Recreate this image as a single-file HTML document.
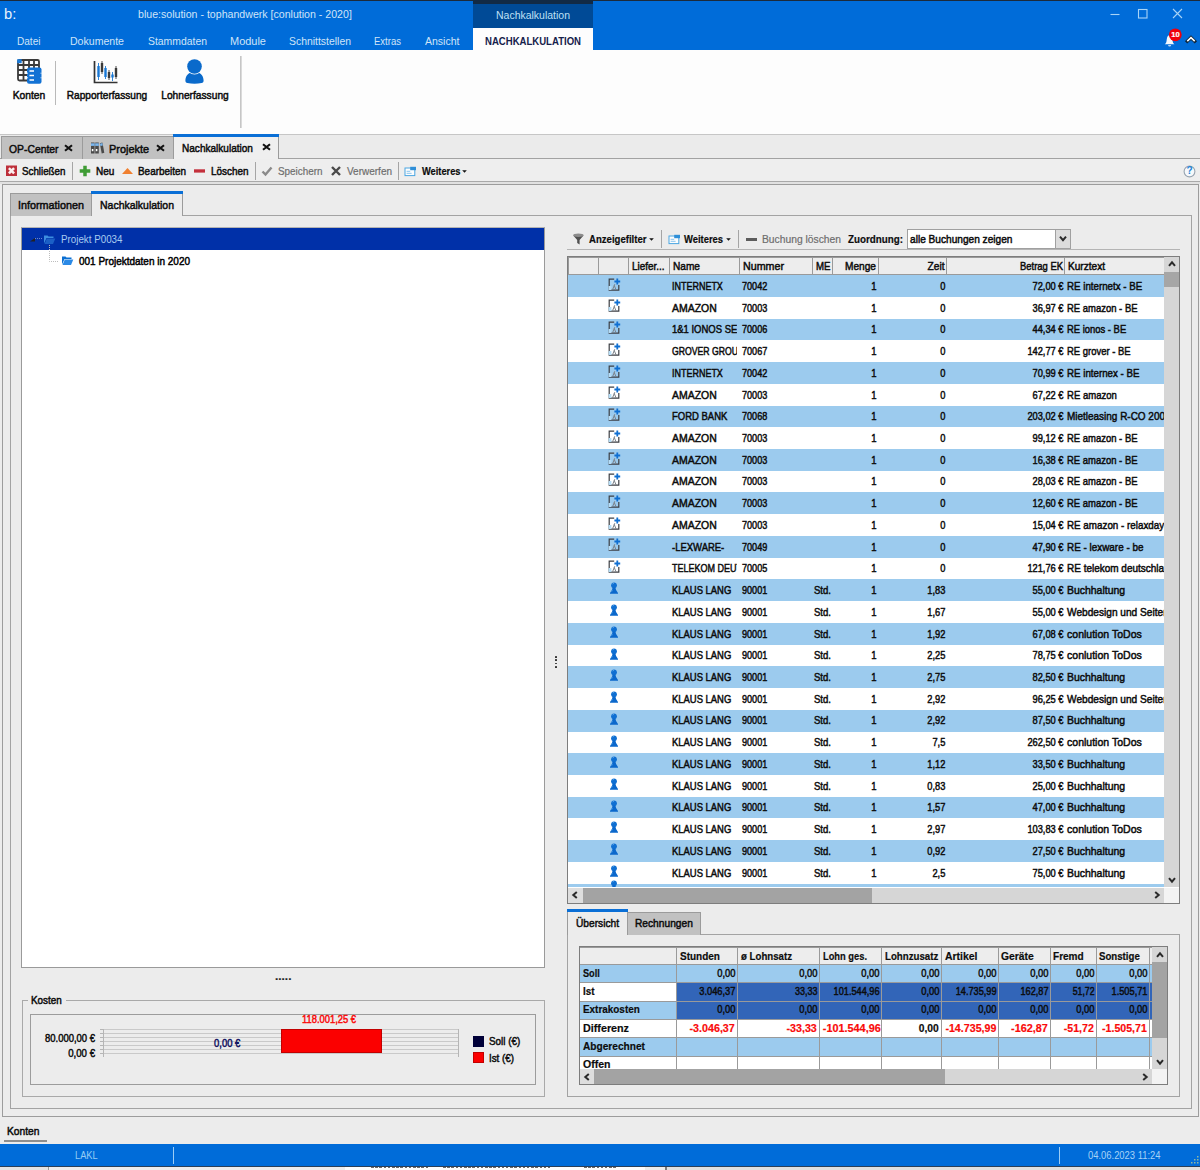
<!DOCTYPE html>
<html lang="de"><head><meta charset="utf-8"><title>blue:solution - tophandwerk [conlution - 2020]</title>
<style>
html,body{margin:0;padding:0;}
body{width:1200px;height:1170px;position:relative;overflow:hidden;background:#ececec;font-family:"Liberation Sans",sans-serif;font-size:11.6px;color:#0c0c0c;}
section{position:absolute;left:0;top:0;}
div,span.t,svg{position:absolute;box-sizing:border-box;}
span.t{white-space:nowrap;line-height:14px;height:14px;transform-origin:0 0;-webkit-text-stroke:0.5px currentColor;}
span.b{font-weight:bold;-webkit-text-stroke:0.2px currentColor;}
span.n{-webkit-text-stroke:0;}
</style></head>
<body>
<section id="window-chrome">
<div style="left:0px;top:0px;width:1200px;height:50px;background:#006cd9;"></div>
<div style="left:0px;top:0px;width:1200px;height:1px;background:#1c2a3a;"></div>
<div style="left:473px;top:1px;width:120px;height:27px;background:#004a96;"></div>
<div style="left:473px;top:0px;width:120px;height:4px;background:#122a45;"></div>
<div style="left:473px;top:28px;width:120px;height:22px;background:#fdfdfd;"></div>
<span class="t n" style="left:3.5px;top:6.93px;transform:scaleX(0.950);font-size:15.5px;color:#e8f2fc;">b:</span>
<span class="t n" style="left:137.5px;top:6.88px;transform:scaleX(0.914);color:#cfe4f8;">blue:solution - tophandwerk [conlution - 2020]</span>
<span class="t n" style="left:473px;top:7.58px;width:120px;text-align:center;transform:scaleX(0.904);transform-origin:50% 0;color:#bfe0f5;">Nachkalkulation</span>
<span class="t n" style="left:16.5px;top:33.98px;transform:scaleX(0.868);color:#cfe4f8;">Datei</span>
<span class="t n" style="left:70px;top:33.98px;transform:scaleX(0.910);color:#cfe4f8;">Dokumente</span>
<span class="t n" style="left:147.5px;top:33.98px;transform:scaleX(0.897);color:#cfe4f8;">Stammdaten</span>
<span class="t n" style="left:230px;top:33.98px;transform:scaleX(0.946);color:#cfe4f8;">Module</span>
<span class="t n" style="left:289px;top:33.98px;transform:scaleX(0.899);color:#cfe4f8;">Schnittstellen</span>
<span class="t n" style="left:374px;top:33.98px;transform:scaleX(0.821);color:#cfe4f8;">Extras</span>
<span class="t n" style="left:424.5px;top:33.98px;transform:scaleX(0.907);color:#cfe4f8;">Ansicht</span>
<span class="t b n" style="left:473px;top:34.28px;width:120px;text-align:center;transform:scaleX(0.825);transform-origin:50% 0;color:#15204a;">NACHKALKULATION</span>
<svg style="left:1105px;top:4px" width="90" height="22" viewBox="0 0 90 22"><g stroke="#a8d4f7" stroke-width="1.1" fill="none"><path d="M5.5 10.5h9"/><rect x="33.5" y="5.5" width="8.5" height="8.5"/><path d="M68 5l9 9M77 5l-9 9"/></g></svg>
<svg style="left:1160px;top:26px" width="40" height="24" viewBox="0 0 40 24"><path d="M4.800 18.200c1.800-1.200 1.700-3.200 2-5.200c.3-2.200 1.200-3.600 2.800-3.900c1.600.3 2.500 1.700 2.800 3.900c.3 2 .2 4 2 5.200z" fill="#f4f8fd"/><path d="M8.100 19.200h3c0 1.600-3 1.600-3 0z" fill="#f4f8fd"/><circle cx="15.300" cy="8.800" r="6.400" fill="#f0000c"/><path d="M27.300 15.200l3.700-3.500l3.700 3.500" stroke="#10283c" stroke-width="3.400" fill="none" stroke-linecap="square"/><path d="M27.300 15.200l3.700-3.500l3.700 3.500" stroke="#fff" stroke-width="1.600" fill="none"/></svg>
<span class="t b" style="left:1169px;top:28.03px;width:13px;text-align:center;transform:scaleX(0.950);transform-origin:50% 0;font-size:8px;color:#fff;">10</span>
<div style="left:0px;top:50px;width:1200px;height:84px;background:#fdfdfd;"></div>
<div style="left:0px;top:134px;width:1200px;height:1px;background:#c6c6c6;"></div>
<div style="left:55px;top:61px;width:1px;height:44px;background:#b9b9b9;"></div>
<div style="left:240px;top:56px;width:2px;height:72px;background:linear-gradient(90deg,#c6c6c6 0 1px,#dadada 1px 2px);"></div>
<span class="t" style="left:-21.5px;top:88.48px;width:100px;text-align:center;transform:scaleX(0.887);transform-origin:50% 0;">Konten</span>
<span class="t" style="left:56.5px;top:88.48px;width:100px;text-align:center;transform:scaleX(0.872);transform-origin:50% 0;">Rapporterfassung</span>
<span class="t" style="left:144.5px;top:88.48px;width:100px;text-align:center;transform:scaleX(0.880);transform-origin:50% 0;">Lohnerfassung</span>
<svg style="left:16px;top:57px" width="28" height="28" viewBox="0 0 28 28">
<g stroke="#3a3a3a" stroke-width="1.800" fill="none"><rect x="2" y="3" width="21" height="20.500" rx="1.500"/><path d="M2 8h21M2 13h21M2 18h21M7.5 3v20M13 3v20M18 3v20"/></g>
<rect x="1.2" y="2.2" width="4.5" height="4" fill="#1a7ad9"/>
<rect x="11" y="10.500" width="14.500" height="16.300" rx="2" fill="#1272d4"/>
<path d="M13.500 14h4.500M13.500 18.500h4.500M13.500 23h4.500" stroke="#fff" stroke-width="1.500"/>
<path d="M11 16.200h.9M11 20.800h.9M24.600 16.200h.9M24.600 20.800h.9" stroke="#fff" stroke-width="1"/>
</svg>
<svg style="left:92px;top:58px" width="28" height="28" viewBox="0 0 28 28">
<path d="M2.5 3v21.500h23" stroke="#333" stroke-width="1.7" fill="none"/>
<g stroke="#1878d6" stroke-width="2.4"><path d="M6.5 8v11"/><path d="M13.5 10v9"/><path d="M20.500 16.500v3"/></g>
<g stroke="#1878d6" stroke-width="0.9"><path d="M6.5 5v17"/><path d="M13.5 8v13"/><path d="M20.5 14v9"/></g>
<g stroke="#3a3a3a" stroke-width="2.4"><path d="M10 5v9"/><path d="M17 14v6"/><path d="M24 10v9"/></g>
<g stroke="#3a3a3a" stroke-width="0.9"><path d="M10 3v13"/><path d="M17 12v10"/><path d="M24 8v13"/></g>
</svg>
<svg style="left:181px;top:57px" width="28" height="28" viewBox="0 0 28 28">
<path d="M4.400 23.800c0-5 3-7.900 6-8.300h6.200c3 .4 6 3.300 6 8.300c0 1.200-.6 1.900-2 2.300c-4.500 1-9.700 1-14.200 0c-1.400-.4-2-1.100-2-2.300z" fill="#0a6acb"/>
<circle cx="13.500" cy="9.600" r="7.900" fill="#fdfdfd"/><circle cx="13.500" cy="9.500" r="7.300" fill="#0a6acb"/>
</svg>
<div style="left:0px;top:135px;width:1200px;height:24px;background:#ebebeb;"></div>
<div style="left:0px;top:158px;width:1200px;height:1px;background:#a2a2a2;"></div>
<div style="left:1px;top:136px;width:82px;height:23px;background:#c1c1c1;border:1px solid #9b9b9b;border-bottom:none;"></div>
<div style="left:83px;top:136px;width:91px;height:23px;background:#c1c1c1;border:1px solid #9b9b9b;border-left:none;border-bottom:none;"></div>
<div style="left:173px;top:134px;width:106px;height:25px;background:#efefef;border:1px solid #9b9b9b;border-bottom:none;border-top:none;"></div>
<div style="left:173px;top:134px;width:106px;height:2.6px;background:#0a6fd6;"></div>
<span class="t" style="left:8.5px;top:142.08px;transform:scaleX(0.893);">OP-Center</span>
<span class="t" style="left:109px;top:142.08px;transform:scaleX(0.940);">Projekte</span>
<span class="t" style="left:181.5px;top:141.48px;transform:scaleX(0.867);">Nachkalkulation</span>
<svg style="left:64.0px;top:144px" width="9" height="8" viewBox="0 0 9 8"><path d="M1 1.200l7 5.600M8 1.200l-7 5.600" stroke="#111" stroke-width="2.100"/></svg>
<svg style="left:155.5px;top:144px" width="9" height="8" viewBox="0 0 9 8"><path d="M1 1.200l7 5.600M8 1.200l-7 5.600" stroke="#111" stroke-width="2.100"/></svg>
<svg style="left:261.5px;top:143.3px" width="9" height="8" viewBox="0 0 9 8"><path d="M1 1.200l7 5.600M8 1.200l-7 5.600" stroke="#111" stroke-width="2.100"/></svg>
<svg style="left:90px;top:141px" width="15" height="14" viewBox="0 0 15 14"><g fill="#4a4a4a"><rect x="1" y="1.500" width="3.600" height="11"/><rect x="5.200" y="1.500" width="3.600" height="11"/><path d="M9.800 2.200l2.600-.8l1.900 10.300l-2.600.8z"/></g><g fill="#7ab6ee"><rect x="1" y="2.300" width="3.600" height="2.600"/><rect x="5.200" y="2.300" width="3.600" height="2.600"/><path d="M10 2.800l2.400-.7l.4 2.300l-2.400.7z"/></g><g fill="#fff"><rect x="1.8" y="8" width="1.6" height="2.200"/><rect x="5.8" y="8" width="1.6" height="2.200"/></g></svg>
<div style="left:0px;top:159px;width:1200px;height:23px;background:#eeeeee;"></div>
<div style="left:0px;top:181px;width:1200px;height:1px;background:#a9a9a9;"></div>
<div style="left:0px;top:182px;width:1200px;height:2px;background:#e1e1e1;"></div>
<span class="t" style="left:22px;top:163.98px;transform:scaleX(0.843);">Schließen</span>
<span class="t" style="left:96px;top:163.98px;transform:scaleX(0.865);">Neu</span>
<span class="t" style="left:138px;top:163.98px;transform:scaleX(0.856);">Bearbeiten</span>
<span class="t" style="left:210.5px;top:163.98px;transform:scaleX(0.855);">Löschen</span>
<span class="t" style="left:278px;top:163.98px;transform:scaleX(0.852);color:#6d6d6d;-webkit-text-stroke-width:0.2px;">Speichern</span>
<span class="t" style="left:346.5px;top:163.98px;transform:scaleX(0.862);color:#6d6d6d;-webkit-text-stroke-width:0.2px;">Verwerfen</span>
<span class="t b" style="left:421.5px;top:163.98px;transform:scaleX(0.800);">Weiteres</span>
<div style="left:72px;top:162px;width:1px;height:18px;background:#a5a5a5;"></div>
<div style="left:255px;top:162px;width:1px;height:18px;background:#a5a5a5;"></div>
<div style="left:398px;top:162px;width:1px;height:18px;background:#a5a5a5;"></div>
<svg style="left:5px;top:164px" width="13" height="13" viewBox="0 0 13 13"><rect x="1" y="1.500" width="11" height="10.500" fill="#bd2f3a"/><path d="M3.900 4.100l5.200 5.300M9.100 4.100l-5.200 5.300" stroke="#fbeeee" stroke-width="2.5"/></svg>
<svg style="left:79px;top:165px" width="12" height="12" viewBox="0 0 12 12"><path d="M6 0.700v10.600M0.700 6h10.600" stroke="#3f9c35" stroke-width="3.500"/></svg>
<svg style="left:121px;top:166px" width="13" height="10" viewBox="0 0 13 10"><path d="M1 8l5.500-6l5.500 6z" fill="#f08030"/></svg>
<svg style="left:193px;top:168px" width="13" height="6" viewBox="0 0 13 6"><rect x="1" y="1.300" width="11" height="3.300" fill="#c4303c"/></svg>
<svg style="left:261px;top:165px" width="12" height="12" viewBox="0 0 12 12"><path d="M1.5 6.500l3 3l6-7" stroke="#8a8a8a" stroke-width="2.4" fill="none"/></svg>
<svg style="left:330px;top:165px" width="12" height="12" viewBox="0 0 12 12"><path d="M2 2l8 8M10 2l-8 8" stroke="#4a4a4a" stroke-width="2.4"/></svg>
<svg style="left:403.5px;top:165.5px" width="13" height="11" viewBox="0 0 13 11"><rect x="1" y="2" width="9.800" height="7.600" fill="#fdfdfd" stroke="#4ba6e2" stroke-width="1"/><path d="M2.600 5.300h3.600M2.600 7.300h5" stroke="#86c4ee" stroke-width="1"/><rect x="6.200" y="0.800" width="5.800" height="3.400" fill="#2f8fd8"/></svg>
<svg style="left:462.3px;top:169.6px" width="6" height="4" viewBox="0 0 6 4"><path d="M0.200 0.200h4.600l-2.300 2.600z" fill="#111"/></svg>
<svg style="left:1183px;top:164.500px" width="13" height="13" viewBox="0 0 13 13"><circle cx="6.500" cy="6.500" r="5.400" fill="#f6f9fc" stroke="#98a4b0" stroke-width="1.100"/></svg>
<span class="t b n" style="left:1183px;top:164.44px;width:13px;text-align:center;transform:scaleX(1.000);transform-origin:50% 0;font-size:10px;color:#2384d8;">?</span>
</section>
<section id="project-tree">
<div style="left:2px;top:184px;width:1197px;height:933px;background:#ececec;border:1px solid #9c9c9c;"></div>
<div style="left:10px;top:215px;width:1182px;height:894px;background:#ececec;border:1px solid #a3a3a3;"></div>
<div style="left:10px;top:193px;width:82px;height:23px;background:#c1c1c1;border:1px solid #9b9b9b;border-bottom:none;"></div>
<div style="left:91px;top:191px;width:92px;height:25px;background:#ececec;border:1px solid #9b9b9b;border-bottom:none;border-top:none;"></div>
<div style="left:91px;top:191px;width:92px;height:2.6px;background:#0a6fd6;"></div>
<span class="t" style="left:18.3px;top:198.38px;transform:scaleX(0.931);">Informationen</span>
<span class="t" style="left:100px;top:197.78px;transform:scaleX(0.904);">Nachkalkulation</span>
<div style="left:21px;top:227px;width:524px;height:741px;background:#fff;border:1px solid #9a9a9a;border-top-color:#b4b4b4;"></div>
<div style="left:22px;top:228px;width:522px;height:21.5px;background:#0030a8;"></div>
<span class="t n" style="left:61px;top:231.98px;transform:scaleX(0.844);color:#a8ccf0;">Projekt P0034</span>
<span class="t" style="left:79px;top:253.98px;transform:scaleX(0.861);color:#000;-webkit-text-stroke-width:0.5px;">001 Projektdaten in 2020</span>
<svg style="left:43px;top:233.5px" width="13" height="11" viewBox="0 0 13 11"><path d="M1 1.500h3.500l1 1h5v1.500h-7l-2.500 5.500z" fill="#3d8ee0"/><path d="M3.800 4.500h8.500l-2.300 5.500h-8.500z" fill="#1b5fc6"/></svg>
<svg style="left:61px;top:255px" width="13" height="11" viewBox="0 0 13 11"><path d="M1 1.500h3.500l1 1h5v1.500h-7l-2.500 5.500z" fill="#0b6fd2"/><path d="M3.800 4.500h8.500l-2.300 5.500h-8.500z" fill="#2b8ae6"/></svg>
<svg style="left:28px;top:234px" width="40" height="34" viewBox="0 0 40 34"><path d="M2 7.500l5-3.500v3.500z" fill="#222"/><path d="M7 4.500h7" stroke="#6a86cc" stroke-width="1" stroke-dasharray="1 1"/><path d="M21.500 11v16.500h9" stroke="#bdbdbd" stroke-width="1" stroke-dasharray="1 1" fill="none"/></svg>
<span class="t b" style="left:274.6px;top:969.18px;transform:scaleX(1.020);color:#222;">.....</span>
<div style="left:554.8px;top:655.7px;width:1.9px;height:1.9px;background:#2a2a2a;border-radius:0.4px;"></div>
<div style="left:554.8px;top:659.15px;width:1.9px;height:1.9px;background:#2a2a2a;border-radius:0.4px;"></div>
<div style="left:554.8px;top:662.6px;width:1.9px;height:1.9px;background:#2a2a2a;border-radius:0.4px;"></div>
<div style="left:554.8px;top:666.05px;width:1.9px;height:1.9px;background:#2a2a2a;border-radius:0.4px;"></div>
<div style="left:22px;top:1000px;width:523px;height:97px;border:1px solid #a9a9a9;"></div>
<div style="left:28px;top:994px;width:38px;height:12px;background:#ececec;"></div>
<span class="t" style="left:31.2px;top:992.68px;transform:scaleX(0.853);">Kosten</span>
<div style="left:30px;top:1014px;width:506px;height:71px;border:1px solid #9c9c9c;"></div>
<div style="left:103px;top:1029px;width:356px;height:1px;background:#c9c9c9;"></div>
<div style="left:103px;top:1033px;width:356px;height:1px;background:#c9c9c9;"></div>
<div style="left:103px;top:1037px;width:356px;height:1px;background:#c9c9c9;"></div>
<div style="left:103px;top:1041px;width:356px;height:1px;background:#c9c9c9;"></div>
<div style="left:103px;top:1045px;width:356px;height:1px;background:#c9c9c9;"></div>
<div style="left:103px;top:1049px;width:356px;height:1px;background:#c9c9c9;"></div>
<div style="left:103px;top:1053px;width:356px;height:1px;background:#c9c9c9;"></div>
<div style="left:103px;top:1029px;width:1px;height:28px;background:#b5b5b5;"></div>
<div style="left:458px;top:1029px;width:1px;height:28px;background:#b5b5b5;"></div>
<div style="left:100px;top:1029px;width:4px;height:1px;background:#b5b5b5;"></div>
<div style="left:100px;top:1033px;width:4px;height:1px;background:#b5b5b5;"></div>
<div style="left:100px;top:1037px;width:4px;height:1px;background:#b5b5b5;"></div>
<div style="left:100px;top:1041px;width:4px;height:1px;background:#b5b5b5;"></div>
<div style="left:100px;top:1045px;width:4px;height:1px;background:#b5b5b5;"></div>
<div style="left:100px;top:1049px;width:4px;height:1px;background:#b5b5b5;"></div>
<div style="left:100px;top:1053px;width:4px;height:1px;background:#b5b5b5;"></div>
<div style="left:281px;top:1029px;width:101px;height:24px;background:#fb0000;border:1px solid #c20000;"></div>
<span class="t" style="left:30px;top:1030.68px;width:65px;text-align:right;transform:scaleX(0.816);transform-origin:100% 0;">80.000,00 €</span>
<span class="t" style="left:30px;top:1045.98px;width:65px;text-align:right;transform:scaleX(0.831);transform-origin:100% 0;">0,00 €</span>
<span class="t" style="left:213.7px;top:1035.98px;transform:scaleX(0.816);color:#101060;">0,00 €</span>
<span class="t" style="left:278.7px;top:1012.18px;width:100px;text-align:center;transform:scaleX(0.808);transform-origin:50% 0;color:#fa0a0a;">118.001,25 €</span>
<div style="left:473px;top:1036px;width:11px;height:11px;background:#000038;"></div>
<div style="left:473px;top:1052px;width:11px;height:11px;background:#fb0000;border:1px solid #c20000;"></div>
<span class="t" style="left:488.8px;top:1034.48px;transform:scaleX(0.849);">Soll (€)</span>
<span class="t" style="left:488.8px;top:1050.68px;transform:scaleX(0.843);">Ist (€)</span>
</section>
<section id="bookings">
<svg style="left:572px;top:232px" width="13" height="13" viewBox="0 0 13 13"><path d="M1.300 3.500l3.900 4.600v3l2.400 1.300v-4.300l3.900-4.600z" fill="#4f4f4f"/><ellipse cx="6.400" cy="3.300" rx="5.200" ry="1.700" fill="#8c8c8c"/></svg>
<span class="t b" style="left:589px;top:232.08px;transform:scaleX(0.826);">Anzeigefilter</span>
<svg style="left:648.8px;top:237.9px" width="6" height="4" viewBox="0 0 6 4"><path d="M0.200 0.200h4.600l-2.300 2.600z" fill="#111"/></svg>
<div style="left:660.6px;top:230px;width:1px;height:18px;background:#a5a5a5;"></div>
<svg style="left:667.8px;top:233.8px" width="13" height="11" viewBox="0 0 13 11"><rect x="1" y="2" width="9.800" height="7.600" fill="#fdfdfd" stroke="#4ba6e2" stroke-width="1"/><path d="M2.600 5.300h3.600M2.600 7.300h5" stroke="#86c4ee" stroke-width="1"/><rect x="6.200" y="0.800" width="5.800" height="3.400" fill="#2f8fd8"/></svg>
<span class="t b" style="left:684px;top:232.08px;transform:scaleX(0.810);">Weiteres</span>
<svg style="left:726px;top:237.9px" width="6" height="4" viewBox="0 0 6 4"><path d="M0.200 0.200h4.600l-2.300 2.600z" fill="#111"/></svg>
<div style="left:738px;top:230px;width:1px;height:18px;background:#a5a5a5;"></div>
<div style="left:746px;top:237.5px;width:10.5px;height:3px;background:#5c5c5c;"></div>
<span class="t" style="left:762px;top:232.08px;transform:scaleX(0.888);color:#6d6d6d;-webkit-text-stroke-width:0.2px;">Buchung löschen</span>
<span class="t b" style="left:848px;top:232.08px;transform:scaleX(0.845);">Zuordnung:</span>
<div style="left:906.5px;top:229px;width:149.5px;height:20px;background:#fff;border:1px solid #a0a0a0;"></div>
<div style="left:1055px;top:229px;width:16px;height:20px;background:#dcdcdc;border:1px solid #a0a0a0;"></div>
<svg style="left:1058px;top:235px" width="10" height="8" viewBox="0 0 10 8"><path d="M2 1.700l3 3.500l3-3.500" stroke="#2a2a2a" stroke-width="2" fill="none"/></svg>
<span class="t" style="left:910px;top:232.08px;transform:scaleX(0.873);">alle Buchungen zeigen</span>
<div style="left:567px;top:249px;width:613px;height:1px;background:#b4b4b4;"></div>
<div style="left:567px;top:256px;width:613px;height:648px;background:#fff;border:1px solid #7d7d7d;"></div>
<div style="left:568px;top:257px;width:596px;height:18px;background:#ededed;"></div>
<div style="left:568px;top:274px;width:596px;height:1px;background:#9a9a9a;"></div>
<div style="left:568px;top:257px;width:596px;height:1px;background:#9a9a9a;"></div>
<div style="left:598px;top:257px;width:1px;height:18px;background:#9a9a9a;"></div>
<div style="left:628px;top:257px;width:1px;height:18px;background:#9a9a9a;"></div>
<div style="left:669px;top:257px;width:1px;height:18px;background:#9a9a9a;"></div>
<div style="left:739px;top:257px;width:1px;height:18px;background:#9a9a9a;"></div>
<div style="left:812px;top:257px;width:1px;height:18px;background:#9a9a9a;"></div>
<div style="left:832px;top:257px;width:1px;height:18px;background:#9a9a9a;"></div>
<div style="left:878px;top:257px;width:1px;height:18px;background:#9a9a9a;"></div>
<div style="left:946px;top:257px;width:1px;height:18px;background:#9a9a9a;"></div>
<div style="left:1064px;top:257px;width:1px;height:18px;background:#9a9a9a;"></div>
<div style="left:568px;top:257px;width:1px;height:18px;background:#9a9a9a;"></div>
<span class="t" style="left:631.5px;top:259.48px;transform:scaleX(0.854);">Liefer...</span>
<span class="t" style="left:673.3px;top:259.48px;transform:scaleX(0.873);">Name</span>
<span class="t" style="left:742.7px;top:259.48px;transform:scaleX(0.922);">Nummer</span>
<span class="t" style="left:815.5px;top:259.48px;transform:scaleX(0.833);">ME</span>
<span class="t" style="left:832px;top:259.48px;width:44px;text-align:right;transform:scaleX(0.874);transform-origin:100% 0;">Menge</span>
<span class="t" style="left:878px;top:259.48px;width:66.5px;text-align:right;transform:scaleX(0.879);transform-origin:100% 0;">Zeit</span>
<span class="t" style="left:946px;top:259.48px;width:117px;text-align:right;transform:scaleX(0.813);transform-origin:100% 0;">Betrag EK</span>
<span class="t" style="left:1067.8px;top:259.48px;transform:scaleX(0.870);">Kurztext</span>
<div style="left:568px;top:275.2px;width:596px;height:612.3px;overflow:hidden;">
<div style="left:0;top:0px;width:596px;height:22.03px;background:#9ccbee;">
<svg style="left:40px;top:1.5px" width="13" height="15" viewBox="0 0 13 15"><path d="M6.200 2.200h-5v11h9.600v-5.300" fill="none" stroke="#3c3f44" stroke-width="1.200"/><rect x="0.600" y="9" width="2.800" height="4" fill="#b4dcf6"/><path d="M4.600 12.600l2.200-5.400M6.200 8.400l1.900 4.600" stroke="#7d838a" stroke-width="1" fill="none"/><path d="M9.300 1.600v5.800M6.400 4.500h5.800" stroke="#0f6fd2" stroke-width="1.800"/></svg>
<div style="left:101px;top:0;width:68.400px;height:21.73px;overflow:hidden;">
<span class="t" style="left:3.3px;top:3.68px;transform:scaleX(0.774);">INTERNETX</span>
</div>
<span class="t" style="left:173.9px;top:3.68px;transform:scaleX(0.784);">70042</span>
<span class="t" style="left:264px;top:3.68px;width:44.6px;text-align:right;transform:scaleX(0.820);transform-origin:100% 0;">1</span>
<span class="t" style="left:310px;top:3.68px;width:67.3px;text-align:right;transform:scaleX(0.800);transform-origin:100% 0;">0</span>
<span class="t" style="left:378px;top:3.68px;width:117.5px;text-align:right;transform:scaleX(0.800);transform-origin:100% 0;">72,00 €</span>
<span class="t" style="left:499.3px;top:3.68px;transform:scaleX(0.839);">RE internetx - BE</span>
</div>
<div style="left:0;top:21.73px;width:596px;height:22.03px;background:#ffffff;">
<svg style="left:40px;top:1.5px" width="13" height="15" viewBox="0 0 13 15"><path d="M6.200 2.200h-5v11h9.600v-5.300" fill="none" stroke="#3c3f44" stroke-width="1.200"/><rect x="0.600" y="9" width="2.800" height="4" fill="#b4dcf6"/><path d="M4.600 12.600l2.200-5.400M6.200 8.400l1.900 4.600" stroke="#7d838a" stroke-width="1" fill="none"/><path d="M9.300 1.600v5.800M6.400 4.500h5.800" stroke="#0f6fd2" stroke-width="1.800"/></svg>
<div style="left:101px;top:0;width:68.400px;height:21.73px;overflow:hidden;">
<span class="t" style="left:3.3px;top:3.68px;transform:scaleX(0.901);">AMAZON</span>
</div>
<span class="t" style="left:173.9px;top:3.68px;transform:scaleX(0.784);">70003</span>
<span class="t" style="left:264px;top:3.68px;width:44.6px;text-align:right;transform:scaleX(0.820);transform-origin:100% 0;">1</span>
<span class="t" style="left:310px;top:3.68px;width:67.3px;text-align:right;transform:scaleX(0.800);transform-origin:100% 0;">0</span>
<span class="t" style="left:378px;top:3.68px;width:117.5px;text-align:right;transform:scaleX(0.800);transform-origin:100% 0;">36,97 €</span>
<span class="t" style="left:499.3px;top:3.68px;transform:scaleX(0.817);">RE amazon - BE</span>
</div>
<div style="left:0;top:43.46px;width:596px;height:22.03px;background:#9ccbee;">
<svg style="left:40px;top:1.5px" width="13" height="15" viewBox="0 0 13 15"><path d="M6.200 2.200h-5v11h9.600v-5.300" fill="none" stroke="#3c3f44" stroke-width="1.200"/><rect x="0.600" y="9" width="2.800" height="4" fill="#b4dcf6"/><path d="M4.600 12.600l2.200-5.400M6.200 8.400l1.900 4.600" stroke="#7d838a" stroke-width="1" fill="none"/><path d="M9.300 1.600v5.800M6.400 4.500h5.800" stroke="#0f6fd2" stroke-width="1.800"/></svg>
<div style="left:101px;top:0;width:68.400px;height:21.73px;overflow:hidden;">
<span class="t" style="left:3.3px;top:3.68px;transform:scaleX(0.817);">1&amp;1 IONOS SE</span>
</div>
<span class="t" style="left:173.9px;top:3.68px;transform:scaleX(0.784);">70006</span>
<span class="t" style="left:264px;top:3.68px;width:44.6px;text-align:right;transform:scaleX(0.820);transform-origin:100% 0;">1</span>
<span class="t" style="left:310px;top:3.68px;width:67.3px;text-align:right;transform:scaleX(0.800);transform-origin:100% 0;">0</span>
<span class="t" style="left:378px;top:3.68px;width:117.5px;text-align:right;transform:scaleX(0.800);transform-origin:100% 0;">44,34 €</span>
<span class="t" style="left:499.3px;top:3.68px;transform:scaleX(0.813);">RE ionos - BE</span>
</div>
<div style="left:0;top:65.19px;width:596px;height:22.03px;background:#ffffff;">
<svg style="left:40px;top:1.5px" width="13" height="15" viewBox="0 0 13 15"><path d="M6.200 2.200h-5v11h9.600v-5.300" fill="none" stroke="#3c3f44" stroke-width="1.200"/><rect x="0.600" y="9" width="2.800" height="4" fill="#b4dcf6"/><path d="M4.600 12.600l2.200-5.400M6.200 8.400l1.900 4.600" stroke="#7d838a" stroke-width="1" fill="none"/><path d="M9.300 1.600v5.800M6.400 4.500h5.800" stroke="#0f6fd2" stroke-width="1.800"/></svg>
<div style="left:101px;top:0;width:68.400px;height:21.73px;overflow:hidden;">
<span class="t" style="left:3.3px;top:3.68px;transform:scaleX(0.749);">GROVER GROUP</span>
</div>
<span class="t" style="left:173.9px;top:3.68px;transform:scaleX(0.784);">70067</span>
<span class="t" style="left:264px;top:3.68px;width:44.6px;text-align:right;transform:scaleX(0.820);transform-origin:100% 0;">1</span>
<span class="t" style="left:310px;top:3.68px;width:67.3px;text-align:right;transform:scaleX(0.800);transform-origin:100% 0;">0</span>
<span class="t" style="left:378px;top:3.68px;width:117.5px;text-align:right;transform:scaleX(0.800);transform-origin:100% 0;">142,77 €</span>
<span class="t" style="left:499.3px;top:3.68px;transform:scaleX(0.817);">RE grover - BE</span>
</div>
<div style="left:0;top:86.92px;width:596px;height:22.03px;background:#9ccbee;">
<svg style="left:40px;top:1.5px" width="13" height="15" viewBox="0 0 13 15"><path d="M6.200 2.200h-5v11h9.600v-5.300" fill="none" stroke="#3c3f44" stroke-width="1.200"/><rect x="0.600" y="9" width="2.800" height="4" fill="#b4dcf6"/><path d="M4.600 12.600l2.200-5.400M6.200 8.400l1.900 4.600" stroke="#7d838a" stroke-width="1" fill="none"/><path d="M9.300 1.600v5.800M6.400 4.500h5.800" stroke="#0f6fd2" stroke-width="1.800"/></svg>
<div style="left:101px;top:0;width:68.400px;height:21.73px;overflow:hidden;">
<span class="t" style="left:3.3px;top:3.68px;transform:scaleX(0.774);">INTERNETX</span>
</div>
<span class="t" style="left:173.9px;top:3.68px;transform:scaleX(0.784);">70042</span>
<span class="t" style="left:264px;top:3.68px;width:44.6px;text-align:right;transform:scaleX(0.820);transform-origin:100% 0;">1</span>
<span class="t" style="left:310px;top:3.68px;width:67.3px;text-align:right;transform:scaleX(0.800);transform-origin:100% 0;">0</span>
<span class="t" style="left:378px;top:3.68px;width:117.5px;text-align:right;transform:scaleX(0.800);transform-origin:100% 0;">70,99 €</span>
<span class="t" style="left:499.3px;top:3.68px;transform:scaleX(0.839);">RE internex - BE</span>
</div>
<div style="left:0;top:108.65px;width:596px;height:22.03px;background:#ffffff;">
<svg style="left:40px;top:1.5px" width="13" height="15" viewBox="0 0 13 15"><path d="M6.200 2.200h-5v11h9.600v-5.300" fill="none" stroke="#3c3f44" stroke-width="1.200"/><rect x="0.600" y="9" width="2.800" height="4" fill="#b4dcf6"/><path d="M4.600 12.600l2.200-5.400M6.200 8.400l1.900 4.600" stroke="#7d838a" stroke-width="1" fill="none"/><path d="M9.300 1.600v5.800M6.400 4.500h5.800" stroke="#0f6fd2" stroke-width="1.800"/></svg>
<div style="left:101px;top:0;width:68.400px;height:21.73px;overflow:hidden;">
<span class="t" style="left:3.3px;top:3.68px;transform:scaleX(0.901);">AMAZON</span>
</div>
<span class="t" style="left:173.9px;top:3.68px;transform:scaleX(0.784);">70003</span>
<span class="t" style="left:264px;top:3.68px;width:44.6px;text-align:right;transform:scaleX(0.820);transform-origin:100% 0;">1</span>
<span class="t" style="left:310px;top:3.68px;width:67.3px;text-align:right;transform:scaleX(0.800);transform-origin:100% 0;">0</span>
<span class="t" style="left:378px;top:3.68px;width:117.5px;text-align:right;transform:scaleX(0.800);transform-origin:100% 0;">67,22 €</span>
<span class="t" style="left:499.3px;top:3.68px;transform:scaleX(0.822);">RE amazon</span>
</div>
<div style="left:0;top:130.38px;width:596px;height:22.03px;background:#9ccbee;">
<svg style="left:40px;top:1.5px" width="13" height="15" viewBox="0 0 13 15"><path d="M6.200 2.200h-5v11h9.600v-5.300" fill="none" stroke="#3c3f44" stroke-width="1.200"/><rect x="0.600" y="9" width="2.800" height="4" fill="#b4dcf6"/><path d="M4.600 12.600l2.200-5.400M6.200 8.400l1.900 4.600" stroke="#7d838a" stroke-width="1" fill="none"/><path d="M9.300 1.600v5.800M6.400 4.500h5.800" stroke="#0f6fd2" stroke-width="1.800"/></svg>
<div style="left:101px;top:0;width:68.400px;height:21.73px;overflow:hidden;">
<span class="t" style="left:3.3px;top:3.68px;transform:scaleX(0.819);">FORD BANK</span>
</div>
<span class="t" style="left:173.9px;top:3.68px;transform:scaleX(0.784);">70068</span>
<span class="t" style="left:264px;top:3.68px;width:44.6px;text-align:right;transform:scaleX(0.820);transform-origin:100% 0;">1</span>
<span class="t" style="left:310px;top:3.68px;width:67.3px;text-align:right;transform:scaleX(0.800);transform-origin:100% 0;">0</span>
<span class="t" style="left:378px;top:3.68px;width:117.5px;text-align:right;transform:scaleX(0.800);transform-origin:100% 0;">203,02 €</span>
<span class="t" style="left:499.3px;top:3.68px;transform:scaleX(0.859);">Mietleasing R-CO 2000</span>
</div>
<div style="left:0;top:152.11px;width:596px;height:22.03px;background:#ffffff;">
<svg style="left:40px;top:1.5px" width="13" height="15" viewBox="0 0 13 15"><path d="M6.200 2.200h-5v11h9.600v-5.300" fill="none" stroke="#3c3f44" stroke-width="1.200"/><rect x="0.600" y="9" width="2.800" height="4" fill="#b4dcf6"/><path d="M4.600 12.600l2.200-5.400M6.200 8.400l1.900 4.600" stroke="#7d838a" stroke-width="1" fill="none"/><path d="M9.300 1.600v5.800M6.400 4.500h5.800" stroke="#0f6fd2" stroke-width="1.800"/></svg>
<div style="left:101px;top:0;width:68.400px;height:21.73px;overflow:hidden;">
<span class="t" style="left:3.3px;top:3.68px;transform:scaleX(0.901);">AMAZON</span>
</div>
<span class="t" style="left:173.9px;top:3.68px;transform:scaleX(0.784);">70003</span>
<span class="t" style="left:264px;top:3.68px;width:44.6px;text-align:right;transform:scaleX(0.820);transform-origin:100% 0;">1</span>
<span class="t" style="left:310px;top:3.68px;width:67.3px;text-align:right;transform:scaleX(0.800);transform-origin:100% 0;">0</span>
<span class="t" style="left:378px;top:3.68px;width:117.5px;text-align:right;transform:scaleX(0.800);transform-origin:100% 0;">99,12 €</span>
<span class="t" style="left:499.3px;top:3.68px;transform:scaleX(0.817);">RE amazon - BE</span>
</div>
<div style="left:0;top:173.84px;width:596px;height:22.03px;background:#9ccbee;">
<svg style="left:40px;top:1.5px" width="13" height="15" viewBox="0 0 13 15"><path d="M6.200 2.200h-5v11h9.600v-5.300" fill="none" stroke="#3c3f44" stroke-width="1.200"/><rect x="0.600" y="9" width="2.800" height="4" fill="#b4dcf6"/><path d="M4.600 12.600l2.200-5.400M6.200 8.400l1.900 4.600" stroke="#7d838a" stroke-width="1" fill="none"/><path d="M9.300 1.600v5.800M6.400 4.500h5.800" stroke="#0f6fd2" stroke-width="1.800"/></svg>
<div style="left:101px;top:0;width:68.400px;height:21.73px;overflow:hidden;">
<span class="t" style="left:3.3px;top:3.68px;transform:scaleX(0.901);">AMAZON</span>
</div>
<span class="t" style="left:173.9px;top:3.68px;transform:scaleX(0.784);">70003</span>
<span class="t" style="left:264px;top:3.68px;width:44.6px;text-align:right;transform:scaleX(0.820);transform-origin:100% 0;">1</span>
<span class="t" style="left:310px;top:3.68px;width:67.3px;text-align:right;transform:scaleX(0.800);transform-origin:100% 0;">0</span>
<span class="t" style="left:378px;top:3.68px;width:117.5px;text-align:right;transform:scaleX(0.800);transform-origin:100% 0;">16,38 €</span>
<span class="t" style="left:499.3px;top:3.68px;transform:scaleX(0.817);">RE amazon - BE</span>
</div>
<div style="left:0;top:195.57px;width:596px;height:22.03px;background:#ffffff;">
<svg style="left:40px;top:1.5px" width="13" height="15" viewBox="0 0 13 15"><path d="M6.200 2.200h-5v11h9.600v-5.300" fill="none" stroke="#3c3f44" stroke-width="1.200"/><rect x="0.600" y="9" width="2.800" height="4" fill="#b4dcf6"/><path d="M4.600 12.600l2.200-5.400M6.200 8.400l1.900 4.600" stroke="#7d838a" stroke-width="1" fill="none"/><path d="M9.300 1.600v5.800M6.400 4.500h5.800" stroke="#0f6fd2" stroke-width="1.800"/></svg>
<div style="left:101px;top:0;width:68.400px;height:21.73px;overflow:hidden;">
<span class="t" style="left:3.3px;top:3.68px;transform:scaleX(0.901);">AMAZON</span>
</div>
<span class="t" style="left:173.9px;top:3.68px;transform:scaleX(0.784);">70003</span>
<span class="t" style="left:264px;top:3.68px;width:44.6px;text-align:right;transform:scaleX(0.820);transform-origin:100% 0;">1</span>
<span class="t" style="left:310px;top:3.68px;width:67.3px;text-align:right;transform:scaleX(0.800);transform-origin:100% 0;">0</span>
<span class="t" style="left:378px;top:3.68px;width:117.5px;text-align:right;transform:scaleX(0.800);transform-origin:100% 0;">28,03 €</span>
<span class="t" style="left:499.3px;top:3.68px;transform:scaleX(0.817);">RE amazon - BE</span>
</div>
<div style="left:0;top:217.3px;width:596px;height:22.03px;background:#9ccbee;">
<svg style="left:40px;top:1.5px" width="13" height="15" viewBox="0 0 13 15"><path d="M6.200 2.200h-5v11h9.600v-5.300" fill="none" stroke="#3c3f44" stroke-width="1.200"/><rect x="0.600" y="9" width="2.800" height="4" fill="#b4dcf6"/><path d="M4.600 12.600l2.200-5.400M6.200 8.400l1.900 4.600" stroke="#7d838a" stroke-width="1" fill="none"/><path d="M9.300 1.600v5.800M6.400 4.500h5.800" stroke="#0f6fd2" stroke-width="1.800"/></svg>
<div style="left:101px;top:0;width:68.400px;height:21.73px;overflow:hidden;">
<span class="t" style="left:3.3px;top:3.68px;transform:scaleX(0.901);">AMAZON</span>
</div>
<span class="t" style="left:173.9px;top:3.68px;transform:scaleX(0.784);">70003</span>
<span class="t" style="left:264px;top:3.68px;width:44.6px;text-align:right;transform:scaleX(0.820);transform-origin:100% 0;">1</span>
<span class="t" style="left:310px;top:3.68px;width:67.3px;text-align:right;transform:scaleX(0.800);transform-origin:100% 0;">0</span>
<span class="t" style="left:378px;top:3.68px;width:117.5px;text-align:right;transform:scaleX(0.800);transform-origin:100% 0;">12,60 €</span>
<span class="t" style="left:499.3px;top:3.68px;transform:scaleX(0.817);">RE amazon - BE</span>
</div>
<div style="left:0;top:239.03px;width:596px;height:22.03px;background:#ffffff;">
<svg style="left:40px;top:1.5px" width="13" height="15" viewBox="0 0 13 15"><path d="M6.200 2.200h-5v11h9.600v-5.300" fill="none" stroke="#3c3f44" stroke-width="1.200"/><rect x="0.600" y="9" width="2.800" height="4" fill="#b4dcf6"/><path d="M4.600 12.600l2.200-5.400M6.200 8.400l1.900 4.600" stroke="#7d838a" stroke-width="1" fill="none"/><path d="M9.300 1.600v5.800M6.400 4.500h5.800" stroke="#0f6fd2" stroke-width="1.800"/></svg>
<div style="left:101px;top:0;width:68.400px;height:21.73px;overflow:hidden;">
<span class="t" style="left:3.3px;top:3.68px;transform:scaleX(0.901);">AMAZON</span>
</div>
<span class="t" style="left:173.9px;top:3.68px;transform:scaleX(0.784);">70003</span>
<span class="t" style="left:264px;top:3.68px;width:44.6px;text-align:right;transform:scaleX(0.820);transform-origin:100% 0;">1</span>
<span class="t" style="left:310px;top:3.68px;width:67.3px;text-align:right;transform:scaleX(0.800);transform-origin:100% 0;">0</span>
<span class="t" style="left:378px;top:3.68px;width:117.5px;text-align:right;transform:scaleX(0.800);transform-origin:100% 0;">15,04 €</span>
<span class="t" style="left:499.3px;top:3.68px;transform:scaleX(0.847);">RE amazon - relaxdays</span>
</div>
<div style="left:0;top:260.76px;width:596px;height:22.03px;background:#9ccbee;">
<svg style="left:40px;top:1.5px" width="13" height="15" viewBox="0 0 13 15"><path d="M6.200 2.200h-5v11h9.600v-5.300" fill="none" stroke="#3c3f44" stroke-width="1.200"/><rect x="0.600" y="9" width="2.800" height="4" fill="#b4dcf6"/><path d="M4.600 12.600l2.200-5.400M6.200 8.400l1.900 4.600" stroke="#7d838a" stroke-width="1" fill="none"/><path d="M9.300 1.600v5.800M6.400 4.500h5.800" stroke="#0f6fd2" stroke-width="1.800"/></svg>
<div style="left:101px;top:0;width:68.400px;height:21.73px;overflow:hidden;">
<span class="t" style="left:3.3px;top:3.68px;transform:scaleX(0.817);">-LEXWARE-</span>
</div>
<span class="t" style="left:173.9px;top:3.68px;transform:scaleX(0.784);">70049</span>
<span class="t" style="left:264px;top:3.68px;width:44.6px;text-align:right;transform:scaleX(0.820);transform-origin:100% 0;">1</span>
<span class="t" style="left:310px;top:3.68px;width:67.3px;text-align:right;transform:scaleX(0.800);transform-origin:100% 0;">0</span>
<span class="t" style="left:378px;top:3.68px;width:117.5px;text-align:right;transform:scaleX(0.800);transform-origin:100% 0;">47,90 €</span>
<span class="t" style="left:499.3px;top:3.68px;transform:scaleX(0.854);">RE - lexware - be</span>
</div>
<div style="left:0;top:282.49px;width:596px;height:22.03px;background:#ffffff;">
<svg style="left:40px;top:1.5px" width="13" height="15" viewBox="0 0 13 15"><path d="M6.200 2.200h-5v11h9.600v-5.300" fill="none" stroke="#3c3f44" stroke-width="1.200"/><rect x="0.600" y="9" width="2.800" height="4" fill="#b4dcf6"/><path d="M4.600 12.600l2.200-5.400M6.200 8.400l1.900 4.600" stroke="#7d838a" stroke-width="1" fill="none"/><path d="M9.300 1.600v5.800M6.400 4.500h5.800" stroke="#0f6fd2" stroke-width="1.800"/></svg>
<div style="left:101px;top:0;width:68.400px;height:21.73px;overflow:hidden;">
<span class="t" style="left:3.3px;top:3.68px;transform:scaleX(0.777);">TELEKOM DEUTSCHLAND</span>
</div>
<span class="t" style="left:173.9px;top:3.68px;transform:scaleX(0.784);">70005</span>
<span class="t" style="left:264px;top:3.68px;width:44.6px;text-align:right;transform:scaleX(0.820);transform-origin:100% 0;">1</span>
<span class="t" style="left:310px;top:3.68px;width:67.3px;text-align:right;transform:scaleX(0.800);transform-origin:100% 0;">0</span>
<span class="t" style="left:378px;top:3.68px;width:117.5px;text-align:right;transform:scaleX(0.800);transform-origin:100% 0;">121,76 €</span>
<span class="t" style="left:499.3px;top:3.68px;transform:scaleX(0.861);">RE telekom deutschland</span>
</div>
<div style="left:0;top:304.22px;width:596px;height:22.03px;background:#9ccbee;">
<svg style="left:41px;top:3px" width="10" height="12" viewBox="0 0 10 12"><circle cx="5" cy="3.300" r="2.900" fill="#0f6fd2"/><path d="M3.600 5.400h2.800l.7 2.600l1.900 3v.7h-8v-.7l1.900-3z" fill="#0b68cc"/><path d="M3.300 2.300a2 2 0 0 1 1.500-1" stroke="#7cbcf0" stroke-width="0.700" fill="none"/><path d="M2.600 9.800l.8-2" stroke="#5aa8ea" stroke-width="0.700" fill="none"/></svg>
<div style="left:101px;top:0;width:68.400px;height:21.73px;overflow:hidden;">
<span class="t" style="left:3.3px;top:3.68px;transform:scaleX(0.814);">KLAUS LANG</span>
</div>
<span class="t" style="left:173.9px;top:3.68px;transform:scaleX(0.784);">90001</span>
<span class="t" style="left:246.2px;top:3.68px;transform:scaleX(0.824);">Std.</span>
<span class="t" style="left:264px;top:3.68px;width:44.6px;text-align:right;transform:scaleX(0.820);transform-origin:100% 0;">1</span>
<span class="t" style="left:310px;top:3.68px;width:67.3px;text-align:right;transform:scaleX(0.800);transform-origin:100% 0;">1,83</span>
<span class="t" style="left:378px;top:3.68px;width:117.5px;text-align:right;transform:scaleX(0.800);transform-origin:100% 0;">55,00 €</span>
<span class="t" style="left:499.3px;top:3.68px;transform:scaleX(0.901);">Buchhaltung</span>
</div>
<div style="left:0;top:325.95px;width:596px;height:22.03px;background:#ffffff;">
<svg style="left:41px;top:3px" width="10" height="12" viewBox="0 0 10 12"><circle cx="5" cy="3.300" r="2.900" fill="#0f6fd2"/><path d="M3.600 5.400h2.800l.7 2.600l1.900 3v.7h-8v-.7l1.900-3z" fill="#0b68cc"/><path d="M3.300 2.300a2 2 0 0 1 1.500-1" stroke="#7cbcf0" stroke-width="0.700" fill="none"/><path d="M2.600 9.800l.8-2" stroke="#5aa8ea" stroke-width="0.700" fill="none"/></svg>
<div style="left:101px;top:0;width:68.400px;height:21.73px;overflow:hidden;">
<span class="t" style="left:3.3px;top:3.68px;transform:scaleX(0.814);">KLAUS LANG</span>
</div>
<span class="t" style="left:173.9px;top:3.68px;transform:scaleX(0.784);">90001</span>
<span class="t" style="left:246.2px;top:3.68px;transform:scaleX(0.824);">Std.</span>
<span class="t" style="left:264px;top:3.68px;width:44.6px;text-align:right;transform:scaleX(0.820);transform-origin:100% 0;">1</span>
<span class="t" style="left:310px;top:3.68px;width:67.3px;text-align:right;transform:scaleX(0.800);transform-origin:100% 0;">1,67</span>
<span class="t" style="left:378px;top:3.68px;width:117.5px;text-align:right;transform:scaleX(0.800);transform-origin:100% 0;">55,00 €</span>
<span class="t" style="left:499.3px;top:3.68px;transform:scaleX(0.874);">Webdesign und Seiten</span>
</div>
<div style="left:0;top:347.68px;width:596px;height:22.03px;background:#9ccbee;">
<svg style="left:41px;top:3px" width="10" height="12" viewBox="0 0 10 12"><circle cx="5" cy="3.300" r="2.900" fill="#0f6fd2"/><path d="M3.600 5.400h2.800l.7 2.600l1.900 3v.7h-8v-.7l1.900-3z" fill="#0b68cc"/><path d="M3.300 2.300a2 2 0 0 1 1.500-1" stroke="#7cbcf0" stroke-width="0.700" fill="none"/><path d="M2.600 9.800l.8-2" stroke="#5aa8ea" stroke-width="0.700" fill="none"/></svg>
<div style="left:101px;top:0;width:68.400px;height:21.73px;overflow:hidden;">
<span class="t" style="left:3.3px;top:3.68px;transform:scaleX(0.814);">KLAUS LANG</span>
</div>
<span class="t" style="left:173.9px;top:3.68px;transform:scaleX(0.784);">90001</span>
<span class="t" style="left:246.2px;top:3.68px;transform:scaleX(0.824);">Std.</span>
<span class="t" style="left:264px;top:3.68px;width:44.6px;text-align:right;transform:scaleX(0.820);transform-origin:100% 0;">1</span>
<span class="t" style="left:310px;top:3.68px;width:67.3px;text-align:right;transform:scaleX(0.800);transform-origin:100% 0;">1,92</span>
<span class="t" style="left:378px;top:3.68px;width:117.5px;text-align:right;transform:scaleX(0.800);transform-origin:100% 0;">67,08 €</span>
<span class="t" style="left:499.3px;top:3.68px;transform:scaleX(0.909);">conlution ToDos</span>
</div>
<div style="left:0;top:369.41px;width:596px;height:22.03px;background:#ffffff;">
<svg style="left:41px;top:3px" width="10" height="12" viewBox="0 0 10 12"><circle cx="5" cy="3.300" r="2.900" fill="#0f6fd2"/><path d="M3.600 5.400h2.800l.7 2.600l1.900 3v.7h-8v-.7l1.900-3z" fill="#0b68cc"/><path d="M3.300 2.300a2 2 0 0 1 1.500-1" stroke="#7cbcf0" stroke-width="0.700" fill="none"/><path d="M2.600 9.800l.8-2" stroke="#5aa8ea" stroke-width="0.700" fill="none"/></svg>
<div style="left:101px;top:0;width:68.400px;height:21.73px;overflow:hidden;">
<span class="t" style="left:3.3px;top:3.68px;transform:scaleX(0.814);">KLAUS LANG</span>
</div>
<span class="t" style="left:173.9px;top:3.68px;transform:scaleX(0.784);">90001</span>
<span class="t" style="left:246.2px;top:3.68px;transform:scaleX(0.824);">Std.</span>
<span class="t" style="left:264px;top:3.68px;width:44.6px;text-align:right;transform:scaleX(0.820);transform-origin:100% 0;">1</span>
<span class="t" style="left:310px;top:3.68px;width:67.3px;text-align:right;transform:scaleX(0.800);transform-origin:100% 0;">2,25</span>
<span class="t" style="left:378px;top:3.68px;width:117.5px;text-align:right;transform:scaleX(0.800);transform-origin:100% 0;">78,75 €</span>
<span class="t" style="left:499.3px;top:3.68px;transform:scaleX(0.909);">conlution ToDos</span>
</div>
<div style="left:0;top:391.14px;width:596px;height:22.03px;background:#9ccbee;">
<svg style="left:41px;top:3px" width="10" height="12" viewBox="0 0 10 12"><circle cx="5" cy="3.300" r="2.900" fill="#0f6fd2"/><path d="M3.600 5.400h2.800l.7 2.600l1.900 3v.7h-8v-.7l1.900-3z" fill="#0b68cc"/><path d="M3.300 2.300a2 2 0 0 1 1.500-1" stroke="#7cbcf0" stroke-width="0.700" fill="none"/><path d="M2.600 9.800l.8-2" stroke="#5aa8ea" stroke-width="0.700" fill="none"/></svg>
<div style="left:101px;top:0;width:68.400px;height:21.73px;overflow:hidden;">
<span class="t" style="left:3.3px;top:3.68px;transform:scaleX(0.814);">KLAUS LANG</span>
</div>
<span class="t" style="left:173.9px;top:3.68px;transform:scaleX(0.784);">90001</span>
<span class="t" style="left:246.2px;top:3.68px;transform:scaleX(0.824);">Std.</span>
<span class="t" style="left:264px;top:3.68px;width:44.6px;text-align:right;transform:scaleX(0.820);transform-origin:100% 0;">1</span>
<span class="t" style="left:310px;top:3.68px;width:67.3px;text-align:right;transform:scaleX(0.800);transform-origin:100% 0;">2,75</span>
<span class="t" style="left:378px;top:3.68px;width:117.5px;text-align:right;transform:scaleX(0.800);transform-origin:100% 0;">82,50 €</span>
<span class="t" style="left:499.3px;top:3.68px;transform:scaleX(0.901);">Buchhaltung</span>
</div>
<div style="left:0;top:412.87px;width:596px;height:22.03px;background:#ffffff;">
<svg style="left:41px;top:3px" width="10" height="12" viewBox="0 0 10 12"><circle cx="5" cy="3.300" r="2.900" fill="#0f6fd2"/><path d="M3.600 5.400h2.800l.7 2.600l1.900 3v.7h-8v-.7l1.900-3z" fill="#0b68cc"/><path d="M3.300 2.300a2 2 0 0 1 1.500-1" stroke="#7cbcf0" stroke-width="0.700" fill="none"/><path d="M2.600 9.800l.8-2" stroke="#5aa8ea" stroke-width="0.700" fill="none"/></svg>
<div style="left:101px;top:0;width:68.400px;height:21.73px;overflow:hidden;">
<span class="t" style="left:3.3px;top:3.68px;transform:scaleX(0.814);">KLAUS LANG</span>
</div>
<span class="t" style="left:173.9px;top:3.68px;transform:scaleX(0.784);">90001</span>
<span class="t" style="left:246.2px;top:3.68px;transform:scaleX(0.824);">Std.</span>
<span class="t" style="left:264px;top:3.68px;width:44.6px;text-align:right;transform:scaleX(0.820);transform-origin:100% 0;">1</span>
<span class="t" style="left:310px;top:3.68px;width:67.3px;text-align:right;transform:scaleX(0.800);transform-origin:100% 0;">2,92</span>
<span class="t" style="left:378px;top:3.68px;width:117.5px;text-align:right;transform:scaleX(0.800);transform-origin:100% 0;">96,25 €</span>
<span class="t" style="left:499.3px;top:3.68px;transform:scaleX(0.874);">Webdesign und Seiten</span>
</div>
<div style="left:0;top:434.6px;width:596px;height:22.03px;background:#9ccbee;">
<svg style="left:41px;top:3px" width="10" height="12" viewBox="0 0 10 12"><circle cx="5" cy="3.300" r="2.900" fill="#0f6fd2"/><path d="M3.600 5.400h2.800l.7 2.600l1.900 3v.7h-8v-.7l1.900-3z" fill="#0b68cc"/><path d="M3.300 2.300a2 2 0 0 1 1.500-1" stroke="#7cbcf0" stroke-width="0.700" fill="none"/><path d="M2.600 9.800l.8-2" stroke="#5aa8ea" stroke-width="0.700" fill="none"/></svg>
<div style="left:101px;top:0;width:68.400px;height:21.73px;overflow:hidden;">
<span class="t" style="left:3.3px;top:3.68px;transform:scaleX(0.814);">KLAUS LANG</span>
</div>
<span class="t" style="left:173.9px;top:3.68px;transform:scaleX(0.784);">90001</span>
<span class="t" style="left:246.2px;top:3.68px;transform:scaleX(0.824);">Std.</span>
<span class="t" style="left:264px;top:3.68px;width:44.6px;text-align:right;transform:scaleX(0.820);transform-origin:100% 0;">1</span>
<span class="t" style="left:310px;top:3.68px;width:67.3px;text-align:right;transform:scaleX(0.800);transform-origin:100% 0;">2,92</span>
<span class="t" style="left:378px;top:3.68px;width:117.5px;text-align:right;transform:scaleX(0.800);transform-origin:100% 0;">87,50 €</span>
<span class="t" style="left:499.3px;top:3.68px;transform:scaleX(0.901);">Buchhaltung</span>
</div>
<div style="left:0;top:456.33px;width:596px;height:22.03px;background:#ffffff;">
<svg style="left:41px;top:3px" width="10" height="12" viewBox="0 0 10 12"><circle cx="5" cy="3.300" r="2.900" fill="#0f6fd2"/><path d="M3.600 5.400h2.800l.7 2.600l1.900 3v.7h-8v-.7l1.900-3z" fill="#0b68cc"/><path d="M3.300 2.300a2 2 0 0 1 1.500-1" stroke="#7cbcf0" stroke-width="0.700" fill="none"/><path d="M2.600 9.800l.8-2" stroke="#5aa8ea" stroke-width="0.700" fill="none"/></svg>
<div style="left:101px;top:0;width:68.400px;height:21.73px;overflow:hidden;">
<span class="t" style="left:3.3px;top:3.68px;transform:scaleX(0.814);">KLAUS LANG</span>
</div>
<span class="t" style="left:173.9px;top:3.68px;transform:scaleX(0.784);">90001</span>
<span class="t" style="left:246.2px;top:3.68px;transform:scaleX(0.824);">Std.</span>
<span class="t" style="left:264px;top:3.68px;width:44.6px;text-align:right;transform:scaleX(0.820);transform-origin:100% 0;">1</span>
<span class="t" style="left:310px;top:3.68px;width:67.3px;text-align:right;transform:scaleX(0.800);transform-origin:100% 0;">7,5</span>
<span class="t" style="left:378px;top:3.68px;width:117.5px;text-align:right;transform:scaleX(0.800);transform-origin:100% 0;">262,50 €</span>
<span class="t" style="left:499.3px;top:3.68px;transform:scaleX(0.909);">conlution ToDos</span>
</div>
<div style="left:0;top:478.06px;width:596px;height:22.03px;background:#9ccbee;">
<svg style="left:41px;top:3px" width="10" height="12" viewBox="0 0 10 12"><circle cx="5" cy="3.300" r="2.900" fill="#0f6fd2"/><path d="M3.600 5.400h2.800l.7 2.600l1.900 3v.7h-8v-.7l1.900-3z" fill="#0b68cc"/><path d="M3.300 2.300a2 2 0 0 1 1.500-1" stroke="#7cbcf0" stroke-width="0.700" fill="none"/><path d="M2.600 9.800l.8-2" stroke="#5aa8ea" stroke-width="0.700" fill="none"/></svg>
<div style="left:101px;top:0;width:68.400px;height:21.73px;overflow:hidden;">
<span class="t" style="left:3.3px;top:3.68px;transform:scaleX(0.814);">KLAUS LANG</span>
</div>
<span class="t" style="left:173.9px;top:3.68px;transform:scaleX(0.784);">90001</span>
<span class="t" style="left:246.2px;top:3.68px;transform:scaleX(0.824);">Std.</span>
<span class="t" style="left:264px;top:3.68px;width:44.6px;text-align:right;transform:scaleX(0.820);transform-origin:100% 0;">1</span>
<span class="t" style="left:310px;top:3.68px;width:67.3px;text-align:right;transform:scaleX(0.800);transform-origin:100% 0;">1,12</span>
<span class="t" style="left:378px;top:3.68px;width:117.5px;text-align:right;transform:scaleX(0.800);transform-origin:100% 0;">33,50 €</span>
<span class="t" style="left:499.3px;top:3.68px;transform:scaleX(0.901);">Buchhaltung</span>
</div>
<div style="left:0;top:499.79px;width:596px;height:22.03px;background:#ffffff;">
<svg style="left:41px;top:3px" width="10" height="12" viewBox="0 0 10 12"><circle cx="5" cy="3.300" r="2.900" fill="#0f6fd2"/><path d="M3.600 5.400h2.800l.7 2.600l1.900 3v.7h-8v-.7l1.900-3z" fill="#0b68cc"/><path d="M3.300 2.300a2 2 0 0 1 1.500-1" stroke="#7cbcf0" stroke-width="0.700" fill="none"/><path d="M2.600 9.800l.8-2" stroke="#5aa8ea" stroke-width="0.700" fill="none"/></svg>
<div style="left:101px;top:0;width:68.400px;height:21.73px;overflow:hidden;">
<span class="t" style="left:3.3px;top:3.68px;transform:scaleX(0.814);">KLAUS LANG</span>
</div>
<span class="t" style="left:173.9px;top:3.68px;transform:scaleX(0.784);">90001</span>
<span class="t" style="left:246.2px;top:3.68px;transform:scaleX(0.824);">Std.</span>
<span class="t" style="left:264px;top:3.68px;width:44.6px;text-align:right;transform:scaleX(0.820);transform-origin:100% 0;">1</span>
<span class="t" style="left:310px;top:3.68px;width:67.3px;text-align:right;transform:scaleX(0.800);transform-origin:100% 0;">0,83</span>
<span class="t" style="left:378px;top:3.68px;width:117.5px;text-align:right;transform:scaleX(0.800);transform-origin:100% 0;">25,00 €</span>
<span class="t" style="left:499.3px;top:3.68px;transform:scaleX(0.901);">Buchhaltung</span>
</div>
<div style="left:0;top:521.52px;width:596px;height:22.03px;background:#9ccbee;">
<svg style="left:41px;top:3px" width="10" height="12" viewBox="0 0 10 12"><circle cx="5" cy="3.300" r="2.900" fill="#0f6fd2"/><path d="M3.600 5.400h2.800l.7 2.600l1.900 3v.7h-8v-.7l1.900-3z" fill="#0b68cc"/><path d="M3.300 2.300a2 2 0 0 1 1.500-1" stroke="#7cbcf0" stroke-width="0.700" fill="none"/><path d="M2.600 9.800l.8-2" stroke="#5aa8ea" stroke-width="0.700" fill="none"/></svg>
<div style="left:101px;top:0;width:68.400px;height:21.73px;overflow:hidden;">
<span class="t" style="left:3.3px;top:3.68px;transform:scaleX(0.814);">KLAUS LANG</span>
</div>
<span class="t" style="left:173.9px;top:3.68px;transform:scaleX(0.784);">90001</span>
<span class="t" style="left:246.2px;top:3.68px;transform:scaleX(0.824);">Std.</span>
<span class="t" style="left:264px;top:3.68px;width:44.6px;text-align:right;transform:scaleX(0.820);transform-origin:100% 0;">1</span>
<span class="t" style="left:310px;top:3.68px;width:67.3px;text-align:right;transform:scaleX(0.800);transform-origin:100% 0;">1,57</span>
<span class="t" style="left:378px;top:3.68px;width:117.5px;text-align:right;transform:scaleX(0.800);transform-origin:100% 0;">47,00 €</span>
<span class="t" style="left:499.3px;top:3.68px;transform:scaleX(0.901);">Buchhaltung</span>
</div>
<div style="left:0;top:543.25px;width:596px;height:22.03px;background:#ffffff;">
<svg style="left:41px;top:3px" width="10" height="12" viewBox="0 0 10 12"><circle cx="5" cy="3.300" r="2.900" fill="#0f6fd2"/><path d="M3.600 5.400h2.800l.7 2.600l1.900 3v.7h-8v-.7l1.900-3z" fill="#0b68cc"/><path d="M3.300 2.300a2 2 0 0 1 1.500-1" stroke="#7cbcf0" stroke-width="0.700" fill="none"/><path d="M2.600 9.800l.8-2" stroke="#5aa8ea" stroke-width="0.700" fill="none"/></svg>
<div style="left:101px;top:0;width:68.400px;height:21.73px;overflow:hidden;">
<span class="t" style="left:3.3px;top:3.68px;transform:scaleX(0.814);">KLAUS LANG</span>
</div>
<span class="t" style="left:173.9px;top:3.68px;transform:scaleX(0.784);">90001</span>
<span class="t" style="left:246.2px;top:3.68px;transform:scaleX(0.824);">Std.</span>
<span class="t" style="left:264px;top:3.68px;width:44.6px;text-align:right;transform:scaleX(0.820);transform-origin:100% 0;">1</span>
<span class="t" style="left:310px;top:3.68px;width:67.3px;text-align:right;transform:scaleX(0.800);transform-origin:100% 0;">2,97</span>
<span class="t" style="left:378px;top:3.68px;width:117.5px;text-align:right;transform:scaleX(0.800);transform-origin:100% 0;">103,83 €</span>
<span class="t" style="left:499.3px;top:3.68px;transform:scaleX(0.909);">conlution ToDos</span>
</div>
<div style="left:0;top:564.98px;width:596px;height:22.03px;background:#9ccbee;">
<svg style="left:41px;top:3px" width="10" height="12" viewBox="0 0 10 12"><circle cx="5" cy="3.300" r="2.900" fill="#0f6fd2"/><path d="M3.600 5.400h2.800l.7 2.600l1.900 3v.7h-8v-.7l1.900-3z" fill="#0b68cc"/><path d="M3.300 2.300a2 2 0 0 1 1.500-1" stroke="#7cbcf0" stroke-width="0.700" fill="none"/><path d="M2.600 9.800l.8-2" stroke="#5aa8ea" stroke-width="0.700" fill="none"/></svg>
<div style="left:101px;top:0;width:68.400px;height:21.73px;overflow:hidden;">
<span class="t" style="left:3.3px;top:3.68px;transform:scaleX(0.814);">KLAUS LANG</span>
</div>
<span class="t" style="left:173.9px;top:3.68px;transform:scaleX(0.784);">90001</span>
<span class="t" style="left:246.2px;top:3.68px;transform:scaleX(0.824);">Std.</span>
<span class="t" style="left:264px;top:3.68px;width:44.6px;text-align:right;transform:scaleX(0.820);transform-origin:100% 0;">1</span>
<span class="t" style="left:310px;top:3.68px;width:67.3px;text-align:right;transform:scaleX(0.800);transform-origin:100% 0;">0,92</span>
<span class="t" style="left:378px;top:3.68px;width:117.5px;text-align:right;transform:scaleX(0.800);transform-origin:100% 0;">27,50 €</span>
<span class="t" style="left:499.3px;top:3.68px;transform:scaleX(0.901);">Buchhaltung</span>
</div>
<div style="left:0;top:586.71px;width:596px;height:22.03px;background:#ffffff;">
<svg style="left:41px;top:3px" width="10" height="12" viewBox="0 0 10 12"><circle cx="5" cy="3.300" r="2.900" fill="#0f6fd2"/><path d="M3.600 5.400h2.800l.7 2.600l1.900 3v.7h-8v-.7l1.900-3z" fill="#0b68cc"/><path d="M3.300 2.300a2 2 0 0 1 1.500-1" stroke="#7cbcf0" stroke-width="0.700" fill="none"/><path d="M2.600 9.800l.8-2" stroke="#5aa8ea" stroke-width="0.700" fill="none"/></svg>
<div style="left:101px;top:0;width:68.400px;height:21.73px;overflow:hidden;">
<span class="t" style="left:3.3px;top:3.68px;transform:scaleX(0.814);">KLAUS LANG</span>
</div>
<span class="t" style="left:173.9px;top:3.68px;transform:scaleX(0.784);">90001</span>
<span class="t" style="left:246.2px;top:3.68px;transform:scaleX(0.824);">Std.</span>
<span class="t" style="left:264px;top:3.68px;width:44.6px;text-align:right;transform:scaleX(0.820);transform-origin:100% 0;">1</span>
<span class="t" style="left:310px;top:3.68px;width:67.3px;text-align:right;transform:scaleX(0.800);transform-origin:100% 0;">2,5</span>
<span class="t" style="left:378px;top:3.68px;width:117.5px;text-align:right;transform:scaleX(0.800);transform-origin:100% 0;">75,00 €</span>
<span class="t" style="left:499.3px;top:3.68px;transform:scaleX(0.901);">Buchhaltung</span>
</div>
<div style="left:0;top:608.44px;width:596px;height:22.03px;background:#9ccbee;">
<svg style="left:41px;top:-4px" width="10" height="12" viewBox="0 0 10 12"><circle cx="5" cy="3.300" r="2.900" fill="#0f6fd2"/><path d="M3.600 5.400h2.800l.7 2.600l1.900 3v.7h-8v-.7l1.900-3z" fill="#0b68cc"/><path d="M3.300 2.300a2 2 0 0 1 1.500-1" stroke="#7cbcf0" stroke-width="0.700" fill="none"/><path d="M2.600 9.800l.8-2" stroke="#5aa8ea" stroke-width="0.700" fill="none"/></svg>
</div>
</div>
<div style="left:1164px;top:257px;width:15px;height:630px;background:#d6d6d6;"></div>
<div style="left:1164px;top:272px;width:15px;height:15px;background:#a6a6a6;"></div>
<svg style="left:1167px;top:260px" width="10" height="8" viewBox="0 0 10 8"><path d="M2 5.800l3-3.500l3 3.500" stroke="#2a2a2a" stroke-width="2" fill="none"/></svg>
<svg style="left:1167px;top:876px" width="10" height="8" viewBox="0 0 10 8"><path d="M2 2.200l3 3.500l3-3.500" stroke="#2a2a2a" stroke-width="2" fill="none"/></svg>
<div style="left:568px;top:887.5px;width:596px;height:15.5px;background:#d6d6d6;"></div>
<div style="left:583px;top:887.5px;width:289px;height:15.5px;background:#a3a3a3;"></div>
<div style="left:568px;top:887.5px;width:15px;height:15.5px;background:#dedede;"></div>
<div style="left:1164px;top:887.5px;width:15px;height:15.5px;background:#f3f3f3;"></div>
<svg style="left:571px;top:890px" width="8" height="10" viewBox="0 0 8 10"><path d="M5.800 2l-3.500 3l3.500 3" stroke="#2a2a2a" stroke-width="2" fill="none"/></svg>
<svg style="left:1153px;top:890px" width="8" height="10" viewBox="0 0 8 10"><path d="M2.200 2l3.500 3l-3.500 3" stroke="#2a2a2a" stroke-width="2" fill="none"/></svg>
<div style="left:567px;top:934px;width:613px;height:163px;background:#ececec;border:1px solid #a3a3a3;"></div>
<div style="left:567px;top:909px;width:61px;height:26px;background:#ececec;border:1px solid #9b9b9b;border-bottom:none;border-top:none;"></div>
<div style="left:567px;top:909px;width:61px;height:2.6px;background:#0a6fd6;"></div>
<div style="left:628px;top:912px;width:73px;height:23px;background:#c1c1c1;border:1px solid #9b9b9b;border-bottom:none;border-left:none;"></div>
<span class="t" style="left:575.8px;top:915.68px;transform:scaleX(0.878);">Übersicht</span>
<span class="t" style="left:634.7px;top:916.48px;transform:scaleX(0.879);">Rechnungen</span>
<div style="left:579px;top:946px;width:589px;height:139px;background:#fff;border:1px solid #7d7d7d;"></div>
<div style="left:580px;top:947px;width:572px;height:122px;overflow:hidden;">
<div style="left:0px;top:0px;width:572px;height:18px;background:#ededed;"></div>
<span class="t b" style="left:100px;top:1.68px;transform:scaleX(0.862);">Stunden</span>
<span class="t b" style="left:160.5px;top:1.68px;transform:scaleX(0.833);">ø Lohnsatz</span>
<span class="t b" style="left:242.7px;top:1.68px;transform:scaleX(0.803);">Lohn ges.</span>
<span class="t b" style="left:304.8px;top:1.68px;transform:scaleX(0.836);">Lohnzusatz</span>
<span class="t b" style="left:364.8px;top:1.68px;transform:scaleX(0.900);">Artikel</span>
<span class="t b" style="left:421.3px;top:1.68px;transform:scaleX(0.892);">Geräte</span>
<span class="t b" style="left:473.3px;top:1.68px;transform:scaleX(0.866);">Fremd</span>
<span class="t b" style="left:519.2px;top:1.68px;transform:scaleX(0.833);">Sonstige</span>
<div style="left:0px;top:16.8px;width:96px;height:18.65px;background:#9ccbee;"></div>
<span class="t b" style="left:3.2px;top:18.68px;transform:scaleX(0.790);">Soll</span>
<div style="left:96px;top:16.8px;width:476px;height:18.65px;background:#9ccbee;"></div>
<span class="t" style="left:96px;top:18.68px;width:59.5px;text-align:right;transform:scaleX(0.806);transform-origin:100% 0;">0,00</span>
<span class="t" style="left:157px;top:18.68px;width:80.5px;text-align:right;transform:scaleX(0.806);transform-origin:100% 0;">0,00</span>
<span class="t" style="left:239px;top:18.68px;width:60.5px;text-align:right;transform:scaleX(0.806);transform-origin:100% 0;">0,00</span>
<span class="t" style="left:301px;top:18.68px;width:58.5px;text-align:right;transform:scaleX(0.806);transform-origin:100% 0;">0,00</span>
<span class="t" style="left:361px;top:18.68px;width:55.5px;text-align:right;transform:scaleX(0.806);transform-origin:100% 0;">0,00</span>
<span class="t" style="left:418px;top:18.68px;width:50.5px;text-align:right;transform:scaleX(0.806);transform-origin:100% 0;">0,00</span>
<span class="t" style="left:470px;top:18.68px;width:44.5px;text-align:right;transform:scaleX(0.806);transform-origin:100% 0;">0,00</span>
<span class="t" style="left:516px;top:18.68px;width:51.5px;text-align:right;transform:scaleX(0.806);transform-origin:100% 0;">0,00</span>
<div style="left:0px;top:16.8px;width:572px;height:1px;background:#9a9a9a;"></div>
<div style="left:0px;top:35.15px;width:96px;height:18.65px;background:#fff;"></div>
<span class="t b" style="left:3.2px;top:37.03px;transform:scaleX(0.850);">Ist</span>
<div style="left:96px;top:35.15px;width:476px;height:18.65px;background:#3265b8;"></div>
<span class="t" style="left:96px;top:37.03px;width:59.5px;text-align:right;transform:scaleX(0.804);transform-origin:100% 0;">3.046,37</span>
<span class="t" style="left:157px;top:37.03px;width:80.5px;text-align:right;transform:scaleX(0.775);transform-origin:100% 0;">33,33</span>
<span class="t" style="left:239px;top:37.03px;width:60.5px;text-align:right;transform:scaleX(0.791);transform-origin:100% 0;">101.544,96</span>
<span class="t" style="left:301px;top:37.03px;width:58.5px;text-align:right;transform:scaleX(0.806);transform-origin:100% 0;">0,00</span>
<span class="t" style="left:361px;top:37.03px;width:55.5px;text-align:right;transform:scaleX(0.791);transform-origin:100% 0;">14.735,99</span>
<span class="t" style="left:418px;top:37.03px;width:50.5px;text-align:right;transform:scaleX(0.789);transform-origin:100% 0;">162,87</span>
<span class="t" style="left:470px;top:37.03px;width:44.5px;text-align:right;transform:scaleX(0.751);transform-origin:100% 0;">51,72</span>
<span class="t" style="left:516px;top:37.03px;width:51.5px;text-align:right;transform:scaleX(0.797);transform-origin:100% 0;">1.505,71</span>
<div style="left:0px;top:35.15px;width:572px;height:1px;background:#9a9a9a;"></div>
<div style="left:0px;top:53.5px;width:96px;height:18.65px;background:#9ccbee;"></div>
<span class="t b" style="left:3.2px;top:55.38px;transform:scaleX(0.855);">Extrakosten</span>
<div style="left:96px;top:53.5px;width:476px;height:18.65px;background:#3265b8;"></div>
<span class="t" style="left:96px;top:55.38px;width:59.5px;text-align:right;transform:scaleX(0.806);transform-origin:100% 0;">0,00</span>
<span class="t" style="left:157px;top:55.38px;width:80.5px;text-align:right;transform:scaleX(0.806);transform-origin:100% 0;">0,00</span>
<span class="t" style="left:239px;top:55.38px;width:60.5px;text-align:right;transform:scaleX(0.806);transform-origin:100% 0;">0,00</span>
<span class="t" style="left:301px;top:55.38px;width:58.5px;text-align:right;transform:scaleX(0.806);transform-origin:100% 0;">0,00</span>
<span class="t" style="left:361px;top:55.38px;width:55.5px;text-align:right;transform:scaleX(0.806);transform-origin:100% 0;">0,00</span>
<span class="t" style="left:418px;top:55.38px;width:50.5px;text-align:right;transform:scaleX(0.806);transform-origin:100% 0;">0,00</span>
<span class="t" style="left:470px;top:55.38px;width:44.5px;text-align:right;transform:scaleX(0.806);transform-origin:100% 0;">0,00</span>
<span class="t" style="left:516px;top:55.38px;width:51.5px;text-align:right;transform:scaleX(0.806);transform-origin:100% 0;">0,00</span>
<div style="left:0px;top:53.5px;width:572px;height:1px;background:#9a9a9a;"></div>
<div style="left:0px;top:71.85px;width:96px;height:18.65px;background:#fff;"></div>
<span class="t b" style="left:3.2px;top:73.73px;transform:scaleX(0.927);">Differenz</span>
<div style="left:96px;top:71.85px;width:476px;height:18.65px;background:#fff;"></div>
<span class="t b" style="left:96px;top:73.73px;width:58.8px;text-align:right;transform:scaleX(0.924);transform-origin:100% 0;color:#fa0a0a;">-3.046,37</span>
<span class="t b" style="left:157px;top:73.73px;width:79.8px;text-align:right;transform:scaleX(0.924);transform-origin:100% 0;color:#fa0a0a;">-33,33</span>
<span class="t b" style="left:239px;top:73.73px;width:59.8px;text-align:right;transform:scaleX(0.937);transform-origin:100% 0;color:#fa0a0a;">-101.544,96</span>
<span class="t b" style="left:301px;top:73.73px;width:57.8px;text-align:right;transform:scaleX(0.886);transform-origin:100% 0;">0,00</span>
<span class="t b" style="left:361px;top:73.73px;width:54.8px;text-align:right;transform:scaleX(0.920);transform-origin:100% 0;color:#fa0a0a;">-14.735,99</span>
<span class="t b" style="left:418px;top:73.73px;width:49.8px;text-align:right;transform:scaleX(0.935);transform-origin:100% 0;color:#fa0a0a;">-162,87</span>
<span class="t b" style="left:470px;top:73.73px;width:43.8px;text-align:right;transform:scaleX(0.912);transform-origin:100% 0;color:#fa0a0a;">-51,72</span>
<span class="t b" style="left:516px;top:73.73px;width:50.8px;text-align:right;transform:scaleX(0.914);transform-origin:100% 0;color:#fa0a0a;">-1.505,71</span>
<div style="left:0px;top:71.85px;width:572px;height:1px;background:#9a9a9a;"></div>
<div style="left:0px;top:90.2px;width:96px;height:18.65px;background:#9ccbee;"></div>
<span class="t b" style="left:3.2px;top:92.08px;transform:scaleX(0.874);">Abgerechnet</span>
<div style="left:96px;top:90.2px;width:476px;height:18.65px;background:#9ccbee;"></div>
<div style="left:0px;top:90.2px;width:572px;height:1px;background:#9a9a9a;"></div>
<div style="left:0px;top:108.55px;width:96px;height:18.65px;background:#fff;"></div>
<span class="t b" style="left:3.2px;top:110.43px;transform:scaleX(0.908);">Offen</span>
<div style="left:96px;top:108.55px;width:476px;height:18.65px;background:#fff;"></div>
<div style="left:0px;top:108.55px;width:572px;height:1px;background:#9a9a9a;"></div>
<div style="left:96px;top:0px;width:1px;height:122px;background:#9a9a9a;"></div>
<div style="left:157px;top:0px;width:1px;height:122px;background:#9a9a9a;"></div>
<div style="left:239px;top:0px;width:1px;height:122px;background:#9a9a9a;"></div>
<div style="left:301px;top:0px;width:1px;height:122px;background:#9a9a9a;"></div>
<div style="left:361px;top:0px;width:1px;height:122px;background:#9a9a9a;"></div>
<div style="left:418px;top:0px;width:1px;height:122px;background:#9a9a9a;"></div>
<div style="left:470px;top:0px;width:1px;height:122px;background:#9a9a9a;"></div>
<div style="left:516px;top:0px;width:1px;height:122px;background:#9a9a9a;"></div>
<div style="left:569px;top:0px;width:1px;height:122px;background:#9a9a9a;"></div>
<div style="left:572px;top:0px;width:1px;height:122px;background:#9a9a9a;"></div>
</div>
<div style="left:580px;top:947px;width:572px;height:1px;background:#9a9a9a;"></div>
<div style="left:1152px;top:947px;width:15px;height:122px;background:#d6d6d6;"></div>
<div style="left:1152px;top:962px;width:15px;height:76px;background:#a3a3a3;"></div>
<svg style="left:1155px;top:951px" width="10" height="8" viewBox="0 0 10 8"><path d="M2 5.800l3-3.500l3 3.500" stroke="#2a2a2a" stroke-width="2" fill="none"/></svg>
<svg style="left:1155px;top:1058px" width="10" height="8" viewBox="0 0 10 8"><path d="M2 2.200l3 3.500l3-3.500" stroke="#2a2a2a" stroke-width="2" fill="none"/></svg>
<div style="left:580px;top:1069px;width:572px;height:15px;background:#d6d6d6;"></div>
<div style="left:594px;top:1069px;width:351px;height:15px;background:#a3a3a3;"></div>
<div style="left:580px;top:1069px;width:14px;height:15px;background:#dedede;"></div>
<div style="left:1152px;top:1069px;width:15px;height:15px;background:#f3f3f3;"></div>
<svg style="left:583px;top:1072px" width="8" height="10" viewBox="0 0 8 10"><path d="M5.800 2l-3.500 3l3.500 3" stroke="#2a2a2a" stroke-width="2" fill="none"/></svg>
<svg style="left:1141px;top:1072px" width="8" height="10" viewBox="0 0 8 10"><path d="M2.200 2l3.500 3l-3.500 3" stroke="#2a2a2a" stroke-width="2" fill="none"/></svg>
</section>
<section id="statusbar">
<span class="t" style="left:7px;top:1123.98px;transform:scaleX(0.884);">Konten</span>
<div style="left:4px;top:1140px;width:43px;height:2px;background:#8e8e8e;"></div>
<div style="left:0px;top:1143.8px;width:1200px;height:21.9px;background:#006cd9;"></div>
<span class="t n" style="left:75px;top:1147.68px;transform:scaleX(0.800);color:#96cdf5;">LAKL</span>
<div style="left:173px;top:1147px;width:1px;height:17px;background:#9ccdf6;"></div>
<div style="left:1059px;top:1147px;width:1px;height:17px;background:#9ccdf6;"></div>
<span class="t n" style="left:1087.5px;top:1147.68px;transform:scaleX(0.811);color:#a6d2f6;">04.06.2023 11:24</span>
<svg style="left:1190px;top:1155px" width="10" height="10" viewBox="0 0 10 10"><g fill="#8fb6a0"><rect x="7" y="1" width="1.500" height="1.500"/><rect x="4" y="4" width="1.500" height="1.500"/><rect x="7" y="4" width="1.500" height="1.500"/><rect x="1" y="7" width="1.500" height="1.500"/><rect x="4" y="7" width="1.500" height="1.500"/><rect x="7" y="7" width="1.500" height="1.500"/></g></svg>
<div style="left:0px;top:1165.6px;width:1200px;height:1.1px;background:#2a3f58;"></div>
<div style="left:0px;top:1166.7px;width:1200px;height:3.3px;background:#e0e0e0;"></div>
<div style="left:0px;top:1166.7px;width:48px;height:3.3px;background:#e4e4e4;"></div>
<div style="left:48px;top:1166.7px;width:1px;height:3.3px;background:#9a9a9a;"></div>
<div style="left:49px;top:1166.7px;width:296px;height:3.3px;background:#ededed;"></div>
<div style="left:345px;top:1166.7px;width:300px;height:3.3px;background:#fdfdfd;"></div>
<div style="left:645px;top:1166.7px;width:20px;height:3.3px;background:#ececec;"></div>
<div style="left:665px;top:1166.7px;width:1.5px;height:3.3px;background:#7c7c7c;"></div>
<div style="left:371px;top:1166.7px;width:59px;height:1.6px;background:repeating-linear-gradient(90deg,#3a3a3a 0 2.5px,rgba(255,255,255,0) 2.5px 4.2px);opacity:.75;"></div>
<div style="left:443px;top:1166.7px;width:107px;height:1.6px;background:repeating-linear-gradient(90deg,#3a3a3a 0 2.5px,rgba(255,255,255,0) 2.5px 4.2px);opacity:.75;"></div>
<div style="left:584px;top:1166.7px;width:33px;height:1.6px;background:repeating-linear-gradient(90deg,#3a3a3a 0 2.5px,rgba(255,255,255,0) 2.5px 4.2px);opacity:.75;"></div>
</section>
</body></html>
